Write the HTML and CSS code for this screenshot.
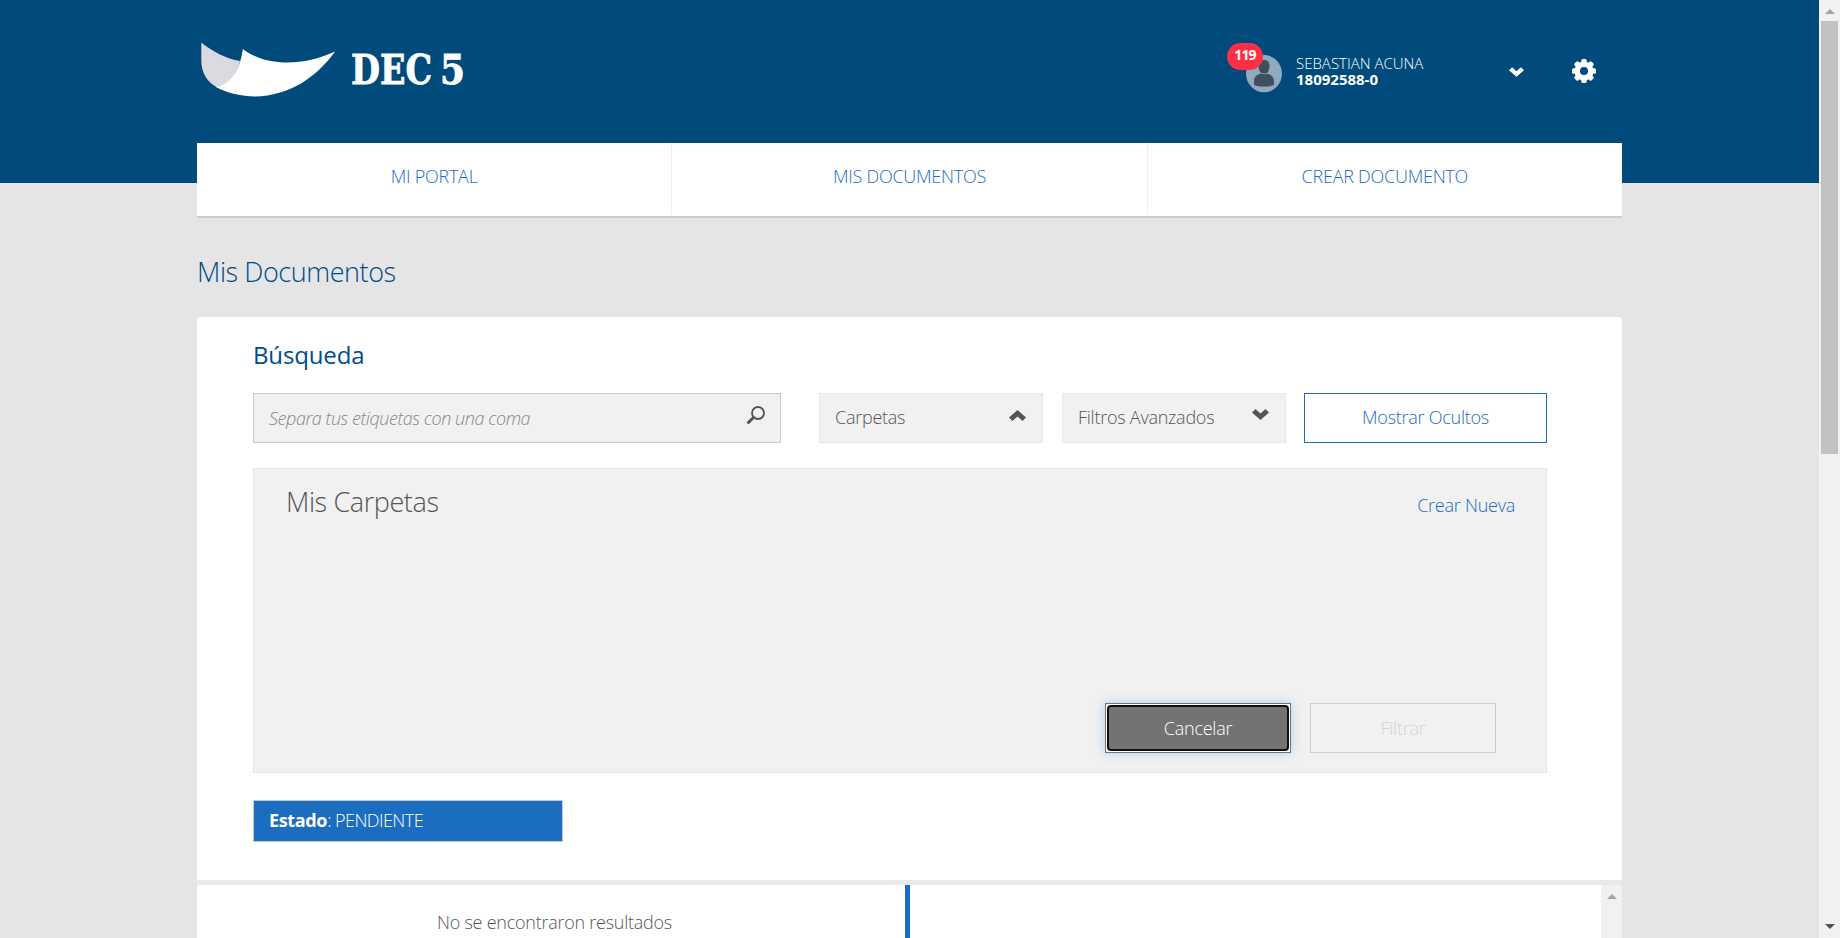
FILE: index.html
```html
<!DOCTYPE html>
<html lang="es">
<head>
<meta charset="utf-8">
<title>DEC 5 - Mis Documentos</title>
<link rel="stylesheet" href="styles.css">
</head>
<body>
<div class="viewport">
  <div class="page">
    <header class="header">
      <svg class="logo" width="290" height="70" viewBox="0 0 290 70">
        <path fill="#dadbe0" d="M4.300 0.500C16 10 29 16.500 43 19C40 31 32 43 21 46C10 40 4 31 4.300 17Z"/>
        <path fill="#fff" d="M45.800 7C68 24 105 25 138 9.500C120 35 92 54 58 54.500C45 54.500 30 51 19 45C31 44 43 30 45.800 7Z"/>
        <text class="logo-text" x="154" y="42" textLength="81" lengthAdjust="spacingAndGlyphs">DEC</text>
        <text class="logo-text" x="243" y="42" textLength="25" lengthAdjust="spacingAndGlyphs">5</text>
      </svg>
      <div class="user">
        <div class="avatar">
          <svg width="36" height="38" viewBox="0 0 36 38">
            <ellipse cx="18" cy="18.700" rx="18" ry="18.600" fill="#8faabf"/>
            <path fill="#3f4f5f" d="M18.500 5c3.400 0 5.200 2.500 5 6.300-.2 3.500-1.500 5.800-2.700 7.200 3.500.8 7.200 3 7.200 7.500V30c-5 2-15 2-20 0v-4c0-4.500 3.700-6.700 7.200-7.500-1.200-1.400-2.500-3.700-2.700-7.200-.2-3.800 2.600-6.300 6-6.300z"/>
            <path d="M13.500 17.500c2.500 1.800 7 1.800 9.500 0" fill="none" stroke="#8faabf" stroke-width=".8"/>
          </svg>
          <span class="badge">119</span>
        </div>
        <div class="user-info">
          <span class="user-name">SEBASTIAN ACUNA</span>
          <strong class="user-id">18092588-0</strong>
        </div>
        <svg class="user-arrow" width="15" height="10" viewBox="0 0 17 11"><path fill="#fff" d="M0 3.500 3.500 0 8.500 4.600 13.500 0 17 3.500 8.500 11Z"/></svg>
        <svg class="gear" width="24" height="24" viewBox="0 0 24 24">
          <g fill="#fff">
            <rect x="9.300" y="0" width="5.400" height="24" rx="1.500"/>
            <rect x="9.300" y="0" width="5.400" height="24" rx="1.500" transform="rotate(45 12 12)"/>
            <rect x="9.300" y="0" width="5.400" height="24" rx="1.500" transform="rotate(90 12 12)"/>
            <rect x="9.300" y="0" width="5.400" height="24" rx="1.500" transform="rotate(135 12 12)"/>
            <circle cx="12" cy="12" r="9.600"/>
          </g>
          <circle cx="12" cy="12" r="4" fill="#004a7c"/>
        </svg>
      </div>
    </header>
    <nav class="nav">
      <a class="nav-item">MI PORTAL</a>
      <a class="nav-item">MIS DOCUMENTOS</a>
      <a class="nav-item">CREAR DOCUMENTO</a>
    </nav>
    <h1 class="title">Mis Documentos</h1>
    <main class="card">
      <h2 class="subtitle">Búsqueda</h2>
      <div class="filters">
        <div class="search">
          <span class="placeholder">Separa tus etiquetas con una coma</span>
          <svg class="lens" width="18" height="18" viewBox="0 0 18 18"><ellipse cx="11" cy="7" rx="6" ry="6" fill="none" stroke="#555" stroke-width="1.800"/><path d="M6.500 11.500 1.500 16.500" stroke="#555" stroke-width="3" stroke-linecap="round"/></svg>
        </div>
        <div class="select">
          <span>Carpetas</span>
          <svg class="chevron up" width="17" height="11" viewBox="0 0 17 11"><path fill="#555" d="M0 7.500 8.500 0 17 7.500 13.500 11 8.500 6.400 3.500 11Z"/></svg>
        </div>
        <div class="select advanced">
          <span>Filtros Avanzados</span>
          <svg class="chevron" width="17" height="11" viewBox="0 0 17 11"><path fill="#555" d="M0 3.500 3.500 0 8.500 4.600 13.500 0 17 3.500 8.500 11Z"/></svg>
        </div>
        <a class="btn-outline">Mostrar Ocultos</a>
      </div>
      <section class="folders">
        <div class="folders-head">
          <h3 class="folders-title">Mis Carpetas</h3>
          <a class="create">Crear Nueva</a>
        </div>
        <div class="actions">
          <button class="btn cancel"><span class="cancel-face">Cancelar</span></button>
          <button class="btn apply">Filtrar</button>
        </div>
      </section>
      <div class="tag"><strong>Estado</strong>: PENDIENTE</div>
    </main>
    <section class="results">
      <div class="list">No se encontraron resultados</div>
      <div class="detail"></div>
      <div class="inner-scroll"><svg width="10" height="5" viewBox="0 0 10 5"><path fill="#a3a3a3" d="M5 0 10 5H0Z"/></svg></div>
    </section>
  </div>
  <div class="scrollbar">
    <svg width="10" height="5" viewBox="0 0 10 5"><path fill="#a3a3a3" d="M5 0 10 5H0Z"/></svg>
    <div class="thumb"></div>
    <svg class="down" width="10" height="5" viewBox="0 0 10 5"><path fill="#505050" d="M0 0H10L5 5Z"/></svg>
  </div>
</div>
</body>
</html>
```
FILE: styles.css
```css
* { box-sizing: border-box; }
body {
  margin: 0;
  height: 938px;
  overflow: hidden;
  font-family: "Open Sans", sans-serif;
  font-weight: 300;
  font-size: 18px;
  line-height: 24px;
  letter-spacing: -.25px;
  color: #555;
}
h1, h2, h3 { margin: 0; font-weight: 300; }
.viewport { display: flex; height: 938px; overflow: hidden; }
.page {
  flex: 1;
  height: 938px;
  overflow: hidden;
  padding: 0 197px;
  background: linear-gradient(#004a7c 183px, #e5e5e5 183px);
}
.header { display: flex; justify-content: space-between; height: 143px; }
.logo { margin-top: 42px; overflow: visible; }
.logo-text {
  font-family: "DejaVu Serif", serif;
  font-weight: 700;
  font-size: 41px;
  letter-spacing: 0;
  fill: #fff;
  stroke: #fff;
  stroke-width: .8px;
}
.user { display: flex; width: 376px; padding-top: 55px; }
.avatar { position: relative; width: 36px; height: 38px; }
.avatar > svg { display: block; }
.badge {
  position: absolute;
  left: -19px;
  top: -12px;
  width: 36px;
  height: 27px;
  border-radius: 14px;
  background: #ff3045;
  color: #fff;
  font-size: 14px;
  font-weight: 700;
  letter-spacing: -.8px;
  line-height: 24px;
  text-align: center;
}
.user-info { display: flex; flex-direction: column; width: 212px; padding-left: 14px; color: #fff; font-size: 15px; line-height: 16px; letter-spacing: 0; }
.user-name { white-space: nowrap; }
.user-id { font-weight: 700; }
.user-arrow { margin: 12px 0 0 15px; }
.gear { margin: 4px 0 0 48px; }
.nav { display: flex; height: 75px; background: #fff; border-bottom: 2px solid #ccc; }
.nav-item { flex: 1; height: 72px; padding-top: 21px; border-right: 1px solid #eee; text-align: center; color: #1a6dbf; }
.nav-item:last-child { border-right: 0; }
.title { height: 99px; padding-top: 35px; font-size: 27px; line-height: 38px; letter-spacing: -.43px; color: #004a8c; }
.card { height: 563px; padding: 23px 75px 0 56px; background: #fff; border-radius: 4px 4px 0 0; }
.subtitle { height: 53px; font-size: 24px; line-height: 30px; font-weight: 400; letter-spacing: -.15px; color: #004a8c; }
.filters { display: flex; height: 50px; }
.search { display: flex; justify-content: space-between; width: 528px; margin-right: 38px; padding: 12px 15px; background: #f1f1f1; border: 1px solid #c8c8c8; }
.placeholder { font-style: italic; letter-spacing: -.44px; color: #888; }
.select { display: flex; justify-content: space-between; width: 224px; margin-right: 19px; padding: 11px 16px 0 15px; background: #f1f1f1; border: 1px solid #e6e6e6; }
.advanced { margin-right: 18px; }
.chevron { margin-top: 4px; }
.chevron.up { margin-top: 5px; }
.btn-outline { width: 243px; padding-top: 11px; border: 1px solid #1a6dbf; text-align: center; color: #1a6dbf; }
.folders { display: flex; flex-direction: column; justify-content: space-between; width: 1294px; height: 305px; margin-top: 25px; padding: 14px 31px 19px 32px; background: #f1f1f1; border: 1px solid #e6e6e6; }
.folders-head { display: flex; justify-content: space-between; }
.folders-title { font-size: 27px; line-height: 38px; letter-spacing: -.4px; }
.create { padding-top: 10px; }
.create { color: #1a6dbf; }
.actions { display: flex; justify-content: flex-end; gap: 19px; padding-right: 19px; }
.btn { width: 186px; height: 50px; padding: 0; font: inherit; letter-spacing: -.25px; background: #f1f1f1; border: 1px solid #ccc; color: #d4d4d4; }
.cancel { padding: 0; background: #fff; border-color: #737373; color: #fff; box-shadow: 0 0 10px rgba(80, 170, 240, .45); }
.cancel-face { display: block; height: 46px; margin: 1px; border: 2px solid #101010; border-radius: 4px; background: #737373; line-height: 42px; }
.tag { width: 310px; height: 42px; margin-top: 27px; padding: 7px 15px; background: #1a6dbf; border: 1px solid #c8c8c8; letter-spacing: -.55px; color: #fff; }
.tag strong { font-weight: 700; letter-spacing: -.35px; }
.results { display: flex; height: 58px; border-top: 5px solid #e9e9e9; background: #fff; }
.list { width: 708px; padding: 25px 0 0 7px; text-align: center; }
.detail { flex: 1; border-left: 5px solid #1a6dbf; }
.inner-scroll { display: flex; justify-content: center; width: 21px; padding-top: 9px; background: #f1f1f1; }
.scrollbar { display: flex; flex-direction: column; align-items: center; width: 21px; height: 938px; padding: 9px 0; background: #f1f1f1; }
.thumb { width: 17px; height: 433px; margin-top: 7px; background: #c1c1c1; }
.down { margin-top: auto; }
```
